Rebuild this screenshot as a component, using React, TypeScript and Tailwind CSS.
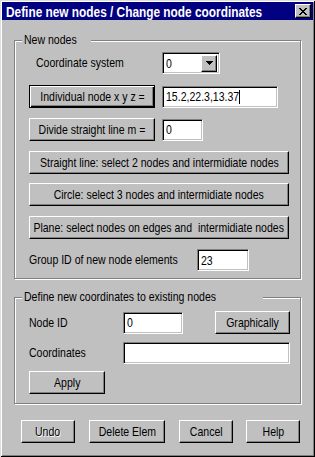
import React from 'react';

const font = "font-['Liberation_Sans',Arial,sans-serif]";

const btn =
  'flex items-center justify-center bg-[#c0c0c0] text-black border border-t-white border-l-white border-r-black border-b-black shadow-[inset_-1px_-1px_0_#808080] h-[23px] leading-none';
const defaultBtn =
  'flex items-center justify-center bg-[#c0c0c0] text-black border border-black shadow-[inset_1px_1px_0_#fff,inset_-1px_-1px_0_#000,inset_-2px_-2px_0_#808080] h-[23px] leading-none';
const field =
  'flex items-center bg-white text-black border border-t-[#808080] border-l-[#808080] border-r-white border-b-white shadow-[inset_1px_1px_0_#000,inset_-1px_-1px_0_#c0c0c0] h-[22px] pl-[3px] leading-none';

// narrow the Arial-width face down to the dialog font's width
function T({ children, center }: { children: React.ReactNode; center?: boolean }) {
  return (
    <span className={`inline-block whitespace-nowrap scale-x-[0.81] ${center ? 'origin-center' : 'origin-left'}`}>
      {children}
    </span>
  );
}

function GroupBox({ title, className, children }: { title: string; className: string; children: React.ReactNode }) {
  return (
    <div className={`relative border border-[#808080] shadow-[inset_1px_1px_0_#fff,1px_1px_0_#fff] ${className}`}>
      <span className="absolute left-[7px] top-[-9px] bg-[#c0c0c0] px-[2px] leading-[16px] whitespace-nowrap">
        <span className="block">
          <T>{title}</T>
        </span>
      </span>
      {children}
    </div>
  );
}

export default function App() {
  return (
    <div
      className={`w-[315px] h-[457px] overflow-hidden bg-[#c0c0c0] p-[2px] text-[13px] text-black ${font} shadow-[inset_1px_1px_0_#dfdfdf,inset_-1px_-1px_0_#000,inset_2px_2px_0_#fff,inset_-2px_-2px_0_#808080]`}
    >
      {/* Title bar */}
      <div className="h-[18px] bg-[#000080] flex items-center pl-[4px] pr-[2px]">
        <div className="flex-1 min-w-0 h-full flex items-center">
          <span className="text-white font-bold text-[15px] leading-none inline-block whitespace-nowrap origin-left scale-x-[0.79]">
            Define new nodes / Change node coordinates
          </span>
        </div>
        <div className="w-[16px] h-[14px] shrink-0 bg-[#c0c0c0] border border-t-white border-l-white border-r-black border-b-black shadow-[inset_-1px_-1px_0_#808080] flex items-center justify-center">
          <svg width="8" height="7" viewBox="0 0 8 7" shapeRendering="crispEdges">
            <path d="M0 0h2v1h-2zM6 0h2v1h-2zM1 1h2v1h-2zM5 1h2v1h-2zM2 2h4v1h-4zM3 3h2v1h-2zM2 4h4v1h-4zM1 5h2v1h-2zM5 5h2v1h-2zM0 6h2v1h-2zM6 6h2v1h-2z" fill="#000" />
          </svg>
        </div>
      </div>

      {/* New nodes */}
      <GroupBox title="New nodes" className="ml-[12px] mt-[20px] w-[287px] h-[239px] pl-[14px] pt-[12px]">
        <div className="flex items-center h-[20px]">
          <span className="ml-[7px] w-[126px]">
            <T>Coordinate system</T>
          </span>
          <div className={`${field} w-[58px] h-[21px] justify-between pr-[2px]`}>
            <T>0</T>
            <div className="w-[16px] h-[17px] bg-[#c0c0c0] border border-t-white border-l-white border-r-black border-b-black shadow-[inset_-1px_-1px_0_#808080] flex items-center justify-center">
              <svg width="7" height="4" viewBox="0 0 7 4" shapeRendering="crispEdges">
                <path d="M0 0h7v1h-7zM1 1h5v1h-5zM2 2h3v1h-3zM3 3h1v1h-1z" fill="#000" />
              </svg>
            </div>
          </div>
        </div>

        <div className="flex items-center mt-[12px]">
          <div className={`${defaultBtn} w-[126px]`}>
            <T center>Individual node x y z =</T>
          </div>
          <div className={`${field} w-[116px] ml-[7px]`}>
            <T>15.2,22.3,13.37</T>
            <span className="w-[1px] h-[14px] bg-black -ml-[17px]" />
          </div>
        </div>

        <div className="flex items-center mt-[10px]">
          <div className={`${btn} w-[126px]`}>
            <T center>Divide straight line m =</T>
          </div>
          <div className={`${field} w-[41px] ml-[7px]`}>
            <T>0</T>
          </div>
        </div>

        <div className={`${btn} w-[260px] mt-[10px]`}>
          <T center>Straight line: select 2 nodes and intermidiate nodes</T>
        </div>
        <div className={`${btn} w-[260px] mt-[9px]`}>
          <T center>Circle: select 3 nodes and intermidiate nodes</T>
        </div>
        <div className={`${btn} w-[260px] mt-[10px]`}>
          <T center>Plane: select nodes on edges and&nbsp; intermidiate nodes</T>
        </div>

        <div className="flex items-center mt-[10px]">
          <span className="w-[168px]">
            <T>Group ID of new node elements</T>
          </span>
          <div className={`${field} w-[52px]`}>
            <T>23</T>
          </div>
        </div>
      </GroupBox>

      {/* Define new coordinates */}
      <GroupBox title="Define new coordinates to existing nodes" className="ml-[12px] mt-[18px] w-[287px] h-[107px] pl-[14px] pt-[13px]">
        <div className="flex items-center">
          <span className="w-[94px]">
            <T>Node ID</T>
          </span>
          <div className={`${field} w-[60px]`}>
            <T>0</T>
          </div>
          <div className={`${btn} w-[75px] ml-[32px]`}>
            <T center>Graphically</T>
          </div>
        </div>
        <div className="flex items-center mt-[8px]">
          <span className="w-[94px]">
            <T>Coordinates</T>
          </span>
          <div className={`${field} w-[167px]`} />
        </div>
        <div className={`${btn} w-[76px] mt-[7px]`}>
          <T center>Apply</T>
        </div>
      </GroupBox>

      {/* Bottom buttons */}
      <div className="flex ml-[19px] mt-[16px]">
        <div className={`${btn} w-[54px] text-[#808080] [text-shadow:1px_1px_0_#fff]`}>
          <T center>Undo</T>
        </div>
        <div className={`${btn} w-[76px] ml-[14px]`}>
          <T center>Delete Elem</T>
        </div>
        <div className={`${btn} w-[54px] ml-[14px]`}>
          <T center>Cancel</T>
        </div>
        <div className={`${btn} w-[54px] ml-[13px]`}>
          <T center>Help</T>
        </div>
      </div>
    </div>
  );
}
